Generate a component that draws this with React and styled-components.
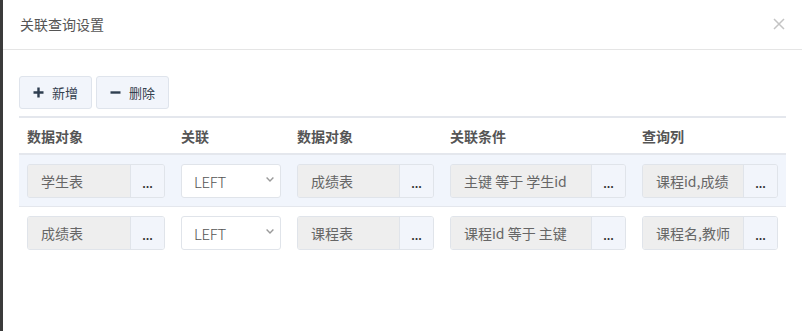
import React from 'react';
import styled, { createGlobalStyle } from 'styled-components';

const GlobalStyle = createGlobalStyle`
  html, body {
    margin: 0;
    padding: 0;
    background: #3b3b3b;
    height: 331px;
    overflow: hidden;
  }
  * { box-sizing: border-box; }
  #root {
    font-family: "Noto Sans CJK SC", "Noto Sans", sans-serif;
  }
`;

const columns = '154px 116px 153px 192px 152px';

const rows = [
  { left: '学生表', join: 'LEFT', right: '成绩表', cond: '主键 等于 学生id', cols: '课程id,成绩', active: true },
  { left: '成绩表', join: 'LEFT', right: '课程表', cond: '课程id 等于 主键', cols: '课程名,教师', active: false },
];

function PlusIcon() {
  return (
    <svg width="11" height="11" viewBox="0 0 11 11">
      <path d="M5.5 0.5v10M0.5 5.5h10" stroke="#2f3e50" strokeWidth="2.4" fill="none" />
    </svg>
  );
}

function MinusIcon() {
  return (
    <svg width="11" height="11" viewBox="0 0 11 11">
      <path d="M0.5 5.5h10" stroke="#2f3e50" strokeWidth="2.4" fill="none" />
    </svg>
  );
}

function Picker({ text }) {
  return (
    <InputGroup>
      <FieldText>{text}</FieldText>
      <DotButton>...</DotButton>
    </InputGroup>
  );
}

function App() {
  return (
    <>
      <GlobalStyle />
      <Modal>
        <Header>
          <Title>关联查询设置</Title>
          <Close>
            <svg width="12" height="12" viewBox="0 0 12 12">
              <path d="M1 1l10 10M11 1L1 11" stroke="#c4c4c4" strokeWidth="1.5" fill="none" />
            </svg>
          </Close>
        </Header>
        <Body>
          <Toolbar>
            <ToolButton>
              <PlusIcon />
              <span>新增</span>
            </ToolButton>
            <ToolButton>
              <MinusIcon />
              <span>删除</span>
            </ToolButton>
          </Toolbar>
          <Table>
            <HeadRow>
              <HeadCell>数据对象</HeadCell>
              <HeadCell>关联</HeadCell>
              <HeadCell>数据对象</HeadCell>
              <HeadCell>关联条件</HeadCell>
              <HeadCell>查询列</HeadCell>
            </HeadRow>
            {rows.map((r, i) => (
              <Row key={i} $active={r.active} $last={i === rows.length - 1}>
                <Cell><Picker text={r.left} /></Cell>
                <Cell>
                  <Select>
                    <span>{r.join}</span>
                    <svg width="8" height="5" viewBox="0 0 8 5">
                      <path d="M0.6 0.6L4 4L7.4 0.6" stroke="#9a9a9a" strokeWidth="1.4" fill="none" />
                    </svg>
                  </Select>
                </Cell>
                <Cell><Picker text={r.right} /></Cell>
                <Cell><Picker text={r.cond} /></Cell>
                <Cell><Picker text={r.cols} /></Cell>
              </Row>
            ))}
          </Table>
        </Body>
      </Modal>
    </>
  );
}

export default App;

const Modal = styled.div`
  margin-left: 3px;
  height: 331px;
  background: #fff;
`;

const Header = styled.div`
  height: 50px;
  border-bottom: 1px solid #e5e5e5;
  display: flex;
  align-items: center;
  justify-content: space-between;
  padding: 0 17px 1px 17px;
`;

const Title = styled.div`
  font-size: 14px;
  line-height: 20px;
  color: #555;
`;

const Close = styled.div`
  display: flex;
  width: 12px;
  height: 12px;
  margin-top: -1px;
`;

const Body = styled.div`
  padding: 26px 0 0 16px;
`;

const Toolbar = styled.div`
  display: flex;
  gap: 4px;
  margin-bottom: 7px;
`;

const ToolButton = styled.div`
  height: 33px;
  display: flex;
  align-items: center;
  gap: 8px;
  padding: 0 13px;
  background: #f2f5fb;
  border: 1px solid #dfe4ec;
  border-radius: 3px;
  font-size: 13px;
  line-height: 20px;
  color: #34404e;
`;

const Table = styled.div`
  width: 767px;
  border-top: 2px solid #e4e7ed;
`;

const HeadRow = styled.div`
  display: grid;
  grid-template-columns: ${columns};
  height: 37px;
  border-bottom: 2px solid #e4e7ed;
  align-items: center;
`;

const HeadCell = styled.div`
  padding: 0 8px;
  font-size: 14px;
  line-height: 20px;
  font-weight: bold;
  color: #555;
  margin-top: 1px;
`;

const Row = styled.div`
  display: grid;
  grid-template-columns: ${columns};
  height: ${(p) => (p.$last ? '51px' : '52px')};
  padding-top: 9px;
  background: ${(p) => (p.$active ? '#f1f5fc' : '#fff')};
  border-bottom: ${(p) => (p.$last ? 'none' : '1px solid #e4e7ed')};
`;

const Cell = styled.div`
  padding: 0 8px;
`;

const InputGroup = styled.div`
  display: flex;
  height: 34px;
  border: 1px solid #e0e4ea;
  border-radius: 3px;
  overflow: hidden;
`;

const FieldText = styled.div`
  flex: 1;
  min-width: 0;
  background: #eeeeee;
  padding-left: 13px;
  font-size: 14px;
  line-height: 32px;
  color: #666;
  white-space: nowrap;
  overflow: hidden;
`;

const DotButton = styled.div`
  width: 34px;
  flex: none;
  border-left: 1px solid #e0e4ea;
  background: #f2f5fb;
  text-align: center;
  font-size: 11px;
  font-weight: bold;
  line-height: 34px;
  color: #333;
  padding-top: 1px;
`;

const Select = styled.div`
  height: 34px;
  display: flex;
  align-items: center;
  justify-content: space-between;
  padding: 0 6px 0 12px;
  background: #fff;
  border: 1px solid #e0e4ea;
  border-radius: 3px;
  font-size: 15px;
  font-weight: 300;
  letter-spacing: -0.3px;
  color: #555;

  svg {
    margin-top: -3px;
  }
`;
